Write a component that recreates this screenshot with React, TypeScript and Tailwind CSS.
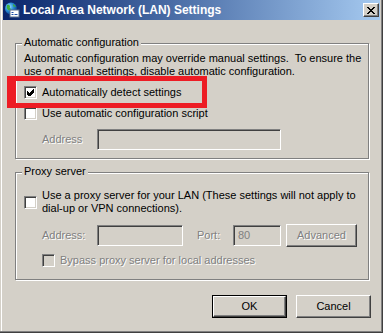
import React from "react";

const FONT = { fontFamily: '"Liberation Sans", Arial, sans-serif' };

function Check({ checked = false, disabled = false }: { checked?: boolean; disabled?: boolean }) {
  return (
    <div
      className={`w-[13px] h-[13px] shrink-0 border border-t-[#808080] border-l-[#808080] border-b-white border-r-white shadow-[inset_1px_1px_0_#404040,inset_-1px_-1px_0_#d4d0c8] flex items-center justify-center ${
        disabled ? "bg-[#d4d0c8]" : "bg-white"
      }`}
    >
      {checked && (
        <svg width="7" height="7" viewBox="0 0 7 7" shapeRendering="crispEdges">
          <polygon points="0,2 2,4 6,0 7,0 7,3 2,8 0,6" fill="#000" />
        </svg>
      )}
    </div>
  );
}

function Field({ w, value, h = 21 }: { w: number; value?: string; h?: number }) {
  return (
    <div
      className="shrink-0 bg-[#d4d0c8] border border-t-[#808080] border-l-[#808080] border-b-white border-r-white shadow-[inset_1px_1px_0_#404040,inset_-1px_-1px_0_#d4d0c8] flex items-center pl-[4px] text-[#808080]"
      style={{ width: w, height: h }}
    >
      {value}
    </div>
  );
}

function Btn({ label, w, disabled = false, def = false }: { label: string; w: number; disabled?: boolean; def?: boolean }) {
  const inner = (
    <div
      className="h-full w-full border border-t-white border-l-white border-b-[#404040] border-r-[#404040] shadow-[inset_-1px_-1px_0_#808080] flex items-center justify-center bg-[#d4d0c8]"
    >
      <span className={disabled ? "text-[#808080] [text-shadow:1px_1px_0_#fff]" : "text-black"}>{label}</span>
    </div>
  );
  if (def) {
    return (
      <div className="border border-black shrink-0" style={{ width: w, height: 23 }}>
        {inner}
      </div>
    );
  }
  return (
    <div className="shrink-0" style={{ width: w, height: 23 }}>
      {inner}
    </div>
  );
}

function Group({ label, h, children }: { label: string; h: number; children: React.ReactNode }) {
  return (
    <div
      className="relative ml-[12px] w-[354px] border border-[#808080] shadow-[inset_1px_1px_0_#fff,1px_1px_0_#fff]"
      style={{ height: h }}
    >
      <span className="absolute left-[6px] -top-[8px] px-[2px] bg-[#d4d0c8] leading-[13px] text-black">{label}</span>
      {children}
    </div>
  );
}

function AppIcon() {
  return (
    <svg width="16" height="16" viewBox="0 0 16 16">
      <defs>
        <radialGradient id="gl" cx="0.35" cy="0.35" r="0.7">
          <stop offset="0" stopColor="#9fe0ff" />
          <stop offset="0.5" stopColor="#2a8fd8" />
          <stop offset="1" stopColor="#0a3f8a" />
        </radialGradient>
      </defs>
      <circle cx="7" cy="6.5" r="6" fill="url(#gl)" />
      <path d="M3 3 Q5 2 6 4 Q5 6 7 7 Q6 9 4 8 Q2 6 3 3Z" fill="#3fae3f" />
      <path d="M9 2 Q11 3 12 5 Q10 5 9 4Z" fill="#3fae3f" />
      <rect x="6" y="8" width="9" height="7" fill="#fff" stroke="#5a6f8f" strokeWidth="1" />
      <rect x="7.5" y="10" width="2" height="1" fill="#1f4fa8" />
      <rect x="7.5" y="12" width="2" height="1" fill="#1f4fa8" />
      <rect x="10.5" y="12" width="3" height="1" fill="#1f4fa8" />
    </svg>
  );
}

export default function App() {
  return (
    <div
      className="relative w-[383px] h-[333px] bg-[#d4d0c8] text-[11px] leading-[13px] text-black overflow-hidden shadow-[inset_-1px_-1px_0_#404040,inset_-2px_-2px_0_#808080,inset_1px_0_0_#d4d0c8,inset_2px_0_0_#fff]"
      style={FONT}
    >
      <div className="px-[3px]">
        {/* Title bar */}
        <div className="h-[20px] flex items-center bg-gradient-to-r from-[#0a246a] to-[#a6caf0]">
          <div className="ml-[1px] w-[16px] h-[16px] flex items-center justify-center">
            <AppIcon />
          </div>
          <span className="ml-[3px] text-white font-bold text-[12px]">Local Area Network (LAN) Settings</span>
          <div className="ml-auto mr-[1px] w-[16px] h-[14px] bg-[#d4d0c8] border border-t-white border-l-white border-b-[#404040] border-r-[#404040] shadow-[inset_-1px_-1px_0_#808080] flex items-center justify-center">
            <svg width="8" height="7" viewBox="0 0 8 7" shapeRendering="crispEdges">
              <path d="M0 0h2v1h-2zM6 0h2v1h-2zM1 1h2v1h-2zM5 1h2v1h-2zM2 2h4v1h-4zM3 3h2v1h-2zM2 4h4v1h-4zM1 5h2v1h-2zM5 5h2v1h-2zM0 6h2v1h-2zM6 6h2v1h-2z" fill="#000" />
            </svg>
          </div>
        </div>

        {/* Group 1 */}
        <div className="mt-[23px]">
          <Group label="Automatic configuration" h={116}>
            <div className="pl-[8px] pt-[8px]">
              <p>
                Automatic configuration may override manual settings.&nbsp; To ensure the
                <br />
                use of manual settings, disable automatic configuration.
              </p>
              <div className="mt-[8px] flex items-center h-[13px]">
                <Check checked />
                <span className="ml-[5px]">Automatically detect settings</span>
              </div>
              <div className="mt-[8px] flex items-center h-[13px]">
                <Check />
                <span className="ml-[5px]">Use automatic configuration script</span>
              </div>
              <div className="mt-[9px] flex items-center">
                <span className="ml-[18px] w-[55px] text-[#808080] [text-shadow:1px_1px_0_#fff]">Address</span>
                <Field w={184} />
              </div>
            </div>
          </Group>
        </div>

        {/* Group 2 */}
        <div className="mt-[13px]">
          <Group label="Proxy server" h={108}>
            <div className="pl-[8px] pt-[16px]">
              <div className="flex items-center">
                <Check />
                <span className="ml-[5px]">
                  Use a proxy server for your LAN (These settings will not apply to
                  <br />
                  dial-up or VPN connections).
                </span>
              </div>
              <div className="mt-[9px] flex items-center">
                <span className="ml-[18px] w-[55px] text-[#808080] [text-shadow:1px_1px_0_#fff]">Address:</span>
                <Field w={86} />
                <span className="ml-[14px] w-[36px] text-[#808080] [text-shadow:1px_1px_0_#fff]">Port:</span>
                <Field w={48} value="80" />
                <div className="ml-[5px]">
                  <Btn label="Advanced" w={71} disabled />
                </div>
              </div>
              <div className="mt-[7px] ml-[18px] flex items-center">
                <Check disabled />
                <span className="ml-[5px] text-[#808080] [text-shadow:1px_1px_0_#fff]">Bypass proxy server for local addresses</span>
              </div>
            </div>
          </Group>
        </div>

        {/* Buttons */}
        <div className="mt-[15px] flex justify-end gap-[9px] pr-[9px]">
          <Btn label="OK" w={75} def />
          <Btn label="Cancel" w={75} />
        </div>
      </div>

      {/* Red highlight annotation */}
      <div className="absolute left-[7px] top-[76px] w-[200px] h-[32px] border-[5px] border-l-[9px] border-[#ed1c24] pointer-events-none" />
    </div>
  );
}
